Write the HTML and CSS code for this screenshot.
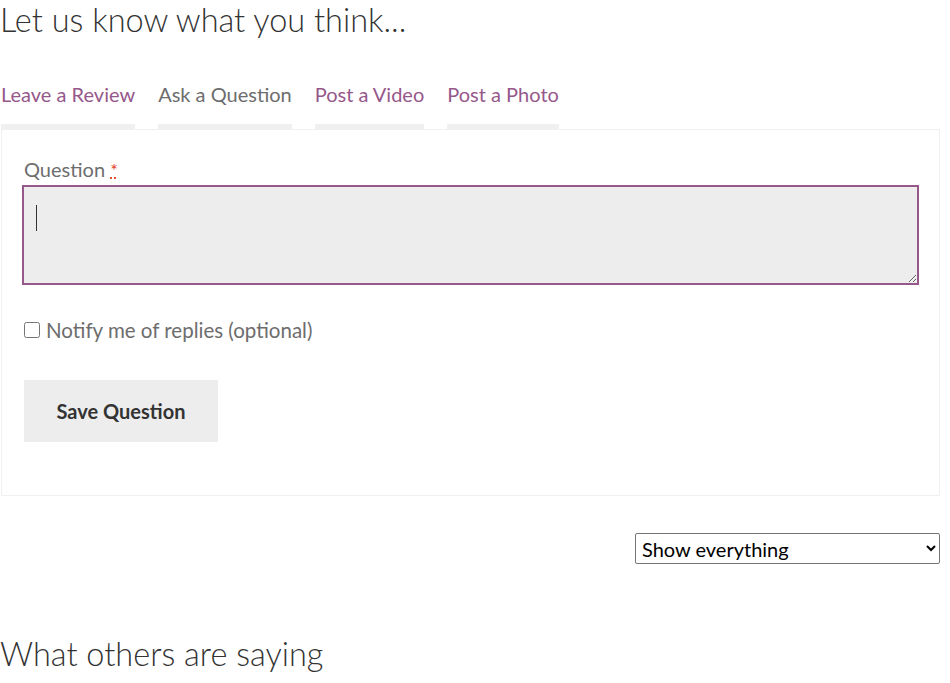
FILE: index.html
```html
<!DOCTYPE html>
<html lang="en">
  <head>
    <meta charset="UTF-8" />
    <title>Reviews</title>
    <link rel="stylesheet" href="styles.css">
  </head>
  <body>
    <div class="reviews">
      <h2 class="section-title">Let us know what you think...</h2>

      <!-- Form tabs -->
      <ul class="tabs">
        <li><a href="#review">Leave a Review</a></li>
        <li class="active"><a href="#question">Ask a Question</a></li>
        <li><a href="#video">Post a Video</a></li>
        <li><a href="#photo">Post a Photo</a></li>
      </ul>

      <div class="panel">
        <form class="question-form">
          <label for="question" class="field-label">Question <abbr class="required" title="required">*</abbr></label>
          <div class="field-wrap">
            <textarea id="question" class="field-input" autofocus></textarea>
            <!-- Text cursor of the focused field -->
            <span class="caret"></span>
          </div>

          <label class="notify">
            <input type="checkbox" />
            <span>Notify me of replies (optional)</span>
          </label>

          <button type="submit" class="save-btn">Save Question</button>
        </form>
      </div>

      <div class="filter">
        <select class="filter-select">
          <option>Show everything</option>
          <option>Reviews</option>
          <option>Questions</option>
          <option>Videos</option>
          <option>Photos</option>
        </select>
      </div>

      <h2 class="section-title others">What others are saying</h2>
    </div>
  </body>
</html>
```

FILE: styles.css
```css
/* Global Styles & Variables */
:root {
  --purple: #96588a;
  --grey-text: #6d6d6d;
  --dark-text: #333;
  --light-bg: #ededed;
  --line: #f0f0f0;
  --font-family: 'Lato', sans-serif;
}

* {
  margin: 0;
  padding: 0;
  box-sizing: border-box;
}

body {
  font-family: var(--font-family);
  color: var(--grey-text);
  background: #ffffff;
}

.reviews {
  width: 940px;
}

.section-title {
  font-size: 32.5px;
  font-weight: 300;
  color: var(--dark-text);
  line-height: 40px;
}

/* Tabs */
.tabs {
  display: flex;
  gap: 23px;
  list-style: none;
  margin-top: 42px;
  padding-left: 1px;
}

.tabs li {
  border-bottom: 5px solid var(--line);
  padding-bottom: 18px;
}

.tabs a {
  display: block;
  font-size: 20px;
  line-height: 24px;
  color: var(--purple);
  text-decoration: none;
}

.tabs .active a {
  color: var(--grey-text);
}

/* Form panel */
.panel {
  margin-left: 1px;
  border: 1px solid var(--line);
  padding: 26px 20px 53px 20px;
}

.field-label {
  display: block;
  font-size: 20px;
  line-height: 26px;
  padding-left: 2px;
  margin-bottom: 2px;
}

.required {
  color: #e2401c;
  text-decoration: underline dotted;
  font-size: 18px;
}

.field-wrap {
  position: relative;
}

.field-input {
  display: block;
  width: 100%;
  height: 100px;
  background: var(--light-bg);
  border: 2px solid var(--purple);
  outline: none;
  padding: 16px 12px;
  font-family: var(--font-family);
  font-size: 20px;
  color: var(--dark-text);
  caret-color: transparent;
}

.caret {
  position: absolute;
  left: 14px;
  top: 20px;
  width: 1px;
  height: 26px;
  background: #333;
}

.notify {
  display: flex;
  align-items: center;
  gap: 6px;
  margin-top: 33px;
  padding-left: 2px;
  font-size: 20.5px;
  line-height: 24px;
}

.notify input {
  width: 16px;
  height: 16px;
  margin: 0;
}

.save-btn {
  display: block;
  margin-top: 38px;
  margin-left: 2px;
  width: 194px;
  height: 62px;
  border: none;
  background: var(--light-bg);
  color: var(--dark-text);
  font-family: var(--font-family);
  font-size: 20px;
  font-weight: 700;
  cursor: pointer;
}

/* Filter */
.filter {
  display: flex;
  justify-content: flex-end;
  margin-top: 37px;
}

.filter-select {
  width: 305px;
  height: 31px;
  border: 1px solid #767676;
  border-radius: 2px;
  background: #fff;
  color: #000;
  font-family: var(--font-family);
  font-size: 20px;
  padding-left: 2px;
}

.others {
  margin-top: 70px;
}
```
